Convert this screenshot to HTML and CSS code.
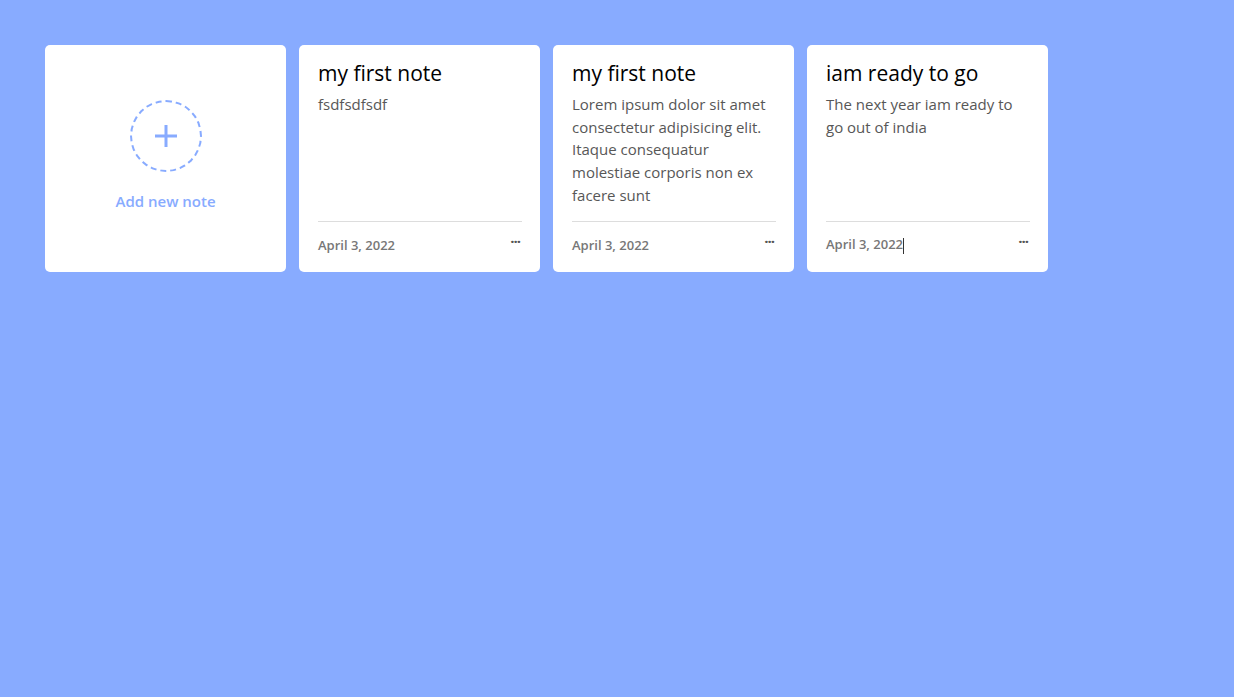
FILE: index.html
```html
<!DOCTYPE html>
<html lang="en">
<head>
    <meta charset="UTF-8">
    <meta name="viewport" content="width=device-width, initial-scale=1.0">
    <title>Notes</title>
    <link rel="stylesheet" href="styles.css">
</head>
<body>
    <div class="wrapper">
        <div class="add-box">
            <div class="icon">
                <svg width="24" height="24" viewBox="0 0 24 24">
                    <path d="M12 1v22M1 12h22" stroke="#88abff" stroke-width="3"/>
                </svg>
            </div>
            <p>Add new note</p>
        </div>
        <div class="note">
            <div class="details">
                <p class="title">my first note</p>
                <span class="desc">fsdfsdfsdf</span>
            </div>
            <div class="bottom">
                <span>April 3, 2022</span>
                <div class="settings">&middot;&middot;&middot;</div>
            </div>
        </div>
        <div class="note">
            <div class="details">
                <p class="title">my first note</p>
                <span class="desc">Lorem ipsum dolor sit amet consectetur adipisicing elit. Itaque consequatur molestiae corporis non ex facere sunt</span>
            </div>
            <div class="bottom">
                <span>April 3, 2022</span>
                <div class="settings">&middot;&middot;&middot;</div>
            </div>
        </div>
        <div class="note">
            <div class="details">
                <p class="title">iam ready to go</p>
                <span class="desc">The next year iam ready to go out of india</span>
            </div>
            <div class="bottom">
                <span>April 3, 2022<i class="caret"></i></span>
                <div class="settings">&middot;&middot;&middot;</div>
            </div>
        </div>
    </div>
</body>
</html>
```

FILE: styles.css
```css
*{
    margin: 0;
    padding: 0;
    box-sizing: border-box;
}
body{
    background: #88abff;
    font-family: "Open Sans", sans-serif;
}
.wrapper{
    display: flex;
    gap: 13px;
    padding: 45px;
}
.wrapper .add-box,
.wrapper .note{
    width: 241px;
    height: 227px;
    background: #fff;
    border-radius: 5px;
}
.add-box{
    display: flex;
    flex-direction: column;
    align-items: center;
    justify-content: center;
    padding-bottom: 6px;
}
.add-box .icon{
    width: 72px;
    height: 72px;
    border: 2px dashed #88abff;
    border-radius: 50%;
    display: flex;
    align-items: center;
    justify-content: center;
}
.add-box p{
    color: #88abff;
    font-size: 15px;
    font-weight: 600;
    margin-top: 19px;
}
.note{
    display: flex;
    flex-direction: column;
    justify-content: space-between;
    padding: 14px 18px 0 19px;
}
.note .title{
    font-size: 21px;
    color: #000;
    line-height: 28px;
}
.note .desc{
    display: block;
    margin-top: 6px;
    font-size: 15px;
    line-height: 22.7px;
    color: #575757;
}
.note .bottom{
    display: flex;
    justify-content: space-between;
    align-items: center;
    border-top: 1px solid #ddd;
    height: 51px;
    padding-bottom: 5px;
}
.bottom span{
    font-size: 13px;
    font-weight: 600;
    color: #777;
}
.bottom .caret{
    display: inline-block;
    width: 1px;
    height: 16px;
    background: #333;
    vertical-align: middle;
}
.bottom .settings{
    color: #555;
    font-size: 15px;
    font-weight: 700;
    letter-spacing: -1px;
    margin-right: 2px;
    margin-top: -8px;
}
```
